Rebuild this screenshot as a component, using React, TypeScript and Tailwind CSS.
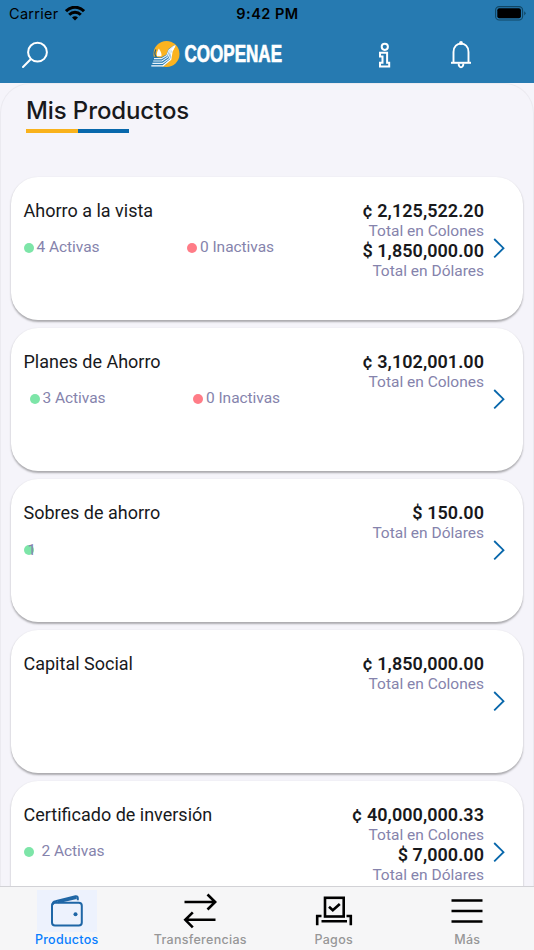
import React from "react";
import clsx from "clsx";

type Total = { amount: string; label: string };

type Product = {
  name: string;
  totals: Total[];
  active?: string;
  inactive?: string;
  statusClass?: string;
  labelClass?: string;
};

const products: Product[] = [
  {
    name: "Ahorro a la vista",
    active: "4 Activas",
    inactive: "0 Inactivas",
    totals: [
      { amount: "¢ 2,125,522.20", label: "Total en Colones" },
      { amount: "$ 1,850,000.00", label: "Total en Dólares" },
    ],
  },
  {
    name: "Planes de Ahorro",
    active: "3 Activas",
    inactive: "0 Inactivas",
    statusClass: "pl-1.5",
    totals: [{ amount: "¢ 3,102,001.00", label: "Total en Colones" }],
  },
  {
    name: "Sobres de ahorro",
    active: "1",
    labelClass: "-ml-[6px] mt-[2px] text-[15px]",
    totals: [{ amount: "$ 150.00", label: "Total en Dólares" }],
  },
  {
    name: "Capital Social",
    totals: [{ amount: "¢ 1,850,000.00", label: "Total en Colones" }],
  },
  {
    name: "Certificado de inversión",
    active: "2 Activas",
    labelClass: "ml-2",
    totals: [
      { amount: "¢ 40,000,000.33", label: "Total en Colones" },
      { amount: "$ 7,000.00", label: "Total en Dólares" },
    ],
  },
];

function StatusBar() {
  return (
    <div className="grid h-7 grid-cols-3 items-center pr-2 pl-[9px] font-['Inter',sans-serif] text-black">
      <div className="flex items-center gap-1.5">
        <span className="text-[14.5px] tracking-[0.3px]">Carrier</span>
        <svg className="-mt-0.5" width="20" height="15" viewBox="0 0 20 15" fill="none" stroke="black" strokeWidth="3">
          <path d="M1 5.2 C6-.1 14-.1 19 5.2" />
          <path d="M4.2 8.8 C7.5 5.5 12.5 5.5 15.8 8.8" />
          <path d="M7 11.5 Q10 8.9 13 11.5 L10 14.5Z" fill="black" stroke="none" />
        </svg>
      </div>
      <div className="text-center text-[14.5px] font-semibold tracking-[0.5px]">9:42 PM</div>
      <svg className="-mt-0.5 justify-self-end" width="31" height="15" viewBox="0 0 31 15">
        <rect x=".6" y=".6" width="27" height="13.4" rx="3.6" fill="none" stroke="#104664" strokeWidth="1.1" />
        <rect x="2.3" y="2.3" width="23.6" height="10" rx="2" fill="black" />
        <path d="M29.2 5.2 Q32 7.3 29.2 9.4Z" fill="#104664" />
      </svg>
    </div>
  );
}

function Logo() {
  return (
    <svg className="overflow-visible" width="136" height="30" viewBox="0 0 136 30">
      <circle cx="15.5" cy="14" r="13" fill="#fbb320" />
      <path d="M2.5 16.5 L10 17.5 L15.5 14.5 L17.5 9 L23.5 5 L21.5 10 L20.3 18 L15 24.5 L11 26.3 H0Z" fill="#2478b0" />
      <path
        d="M3 18.6 H10.5 L15.8 15.5 L18 9.8 L23 6 M2.2 21 H11 L17 17 L19 10.5 L23 6 M1.4 23.4 H11.5 L18.3 18.5 L20 11 L23 6"
        fill="none"
        stroke="#e8f3fa"
        strokeWidth="1.1"
      />
      <path d="M.3 25.8 H12 L19.7 19.5 L21 11.5 L24 5.5" fill="none" stroke="white" strokeWidth="1.3" />
      <path d="M20 9.5 L24.8 4.8 L21.5 11Z" fill="white" />
      <path d="M7.8 8.5 Q11.3 13.5 10.3 16.3 H5.9 Q5.2 13 7.8 8.5Z" fill="white" />
      <path d="M4.9 9.5 Q2.7 14 5.4 17" fill="none" stroke="#185f91" strokeWidth="1.2" />
      <text
        x="33.5"
        y="22.4"
        textLength="97.5"
        lengthAdjust="spacingAndGlyphs"
        className="fill-white stroke-white font-['Liberation_Sans',Arial,sans-serif] text-[24px] font-bold"
        strokeWidth=".7"
      >
        COOPENAE
      </text>
    </svg>
  );
}

function Header() {
  return (
    <header className="h-[83px] shrink-0 bg-[#267ab1]">
      <StatusBar />
      <div className="flex h-[53px] items-center pl-[21px]">
        <svg width="28" height="28" viewBox="0 0 28 28" fill="none" stroke="white" strokeWidth="2" strokeLinecap="round">
          <circle cx="16.5" cy="11.2" r="9.4" />
          <path d="M9.7 18.2 L2 26" />
        </svg>
        <div className="ml-[102px] w-[134px]">
          <Logo />
        </div>
        <svg className="ml-[93px]" width="14" height="28" viewBox="0 0 14 28" fill="none" stroke="white" strokeWidth="2">
          <circle cx="6.8" cy="5.8" r="3.1" />
          <path d="M2 11.8 H9.1 V21.8 H11.2 V25.4 H2 V21.8 H4.5 V15.4 H2Z" />
        </svg>
        <svg className="ml-[58px]" width="22" height="28" viewBox="0 0 22 28" fill="none" stroke="white" strokeWidth="1.9">
          <path d="M3.5 21.5 V11 C3.5 -.2 18.5 -.2 18.5 11 V21.5" />
          <path d="M1 21.8 H21" strokeWidth="2" />
          <circle cx="11" cy="2" r="1.9" fill="white" stroke="none" />
          <path d="M8.7 22.5 C8.3 27.4 13.7 27.4 13.3 22.5" />
        </svg>
      </div>
    </header>
  );
}

function ProductCard({ product }: { product: Product }) {
  return (
    <article className="flex h-[143px] shrink-0 rounded-[27px] bg-white pt-[24px] pr-[18px] pl-[13px] shadow-[0_1.5px_2px_rgba(0,0,0,0.3)]">
      <div className="flex-1">
        <h2 className="-ml-[0.5px] text-[18px] leading-5 text-[#18191c]">{product.name}</h2>
        {product.active && (
          <div className={clsx("-ml-[0.5px] mt-4 flex h-5 text-[15.5px] leading-5 tracking-[-0.05px] text-[#8583ac]", product.statusClass)}>
            <div className="flex w-[163.5px] items-center">
              <span className="mt-[2px] size-[10px] rounded-full bg-[#7de5a8]" />
              <span className={clsx(product.labelClass ?? "ml-[3px]")}>{product.active}</span>
            </div>
            {product.inactive && (
              <div className="flex items-center">
                <span className="mt-[2px] size-[10px] rounded-full bg-[#ff7c87]" />
                <span className="ml-[3px]">{product.inactive}</span>
              </div>
            )}
          </div>
        )}
      </div>
      <div className="text-right">
        {product.totals.map((total) => (
          <React.Fragment key={total.label}>
            <p className="text-[18px] leading-5 font-semibold tracking-[0.05px] text-[#18191c]">{total.amount}</p>
            <p className="text-[15.5px] leading-5 text-[#8583ac]">{total.label}</p>
          </React.Fragment>
        ))}
      </div>
      <svg className="mt-[37px] ml-[9px]" width="12" height="20" viewBox="0 0 12 20" fill="none" stroke="#0867ab" strokeWidth="1.8">
        <path d="M1.2 1 L10.5 10.2 L1.2 19.4" />
      </svg>
    </article>
  );
}

function TabBar() {
  const label = "font-['Inter',sans-serif] text-[12.5px] leading-4 font-medium tracking-[0.3px]";

  return (
    <nav className="z-10 grid h-16 shrink-0 grid-cols-4 border-t border-[#d2d2d6] bg-[#f6f6f7] pt-[3px] text-[#979797]">
      <div className="flex flex-col items-center">
        <div className="flex h-[42px] w-[60px] items-center justify-center bg-[#edf2fd]">
          <svg width="34" height="34" viewBox="0 0 34 34" fill="none" stroke="#1e66a6" strokeWidth="2">
            <rect x="2" y="8.8" width="29.8" height="22.8" rx="3" />
            <path d="M2.5 11 Q2.5 7.7 5.5 7.2 L25.5 2.3 Q27.8 2 27.8 4 V6.2 M8 8.3 L26.5 4" />
            <circle cx="25.5" cy="20.3" r="2" fill="#1e66a6" stroke="none" />
          </svg>
        </div>
        <span className={clsx(label, "text-[#087eff]")}>Productos</span>
      </div>
      <div className="flex flex-col items-center">
        <svg width="34" height="42" viewBox="0 0 34 42" fill="none" stroke="black" strokeWidth="2.6">
          <path d="M1.5 12 H32 M24.5 4.5 L32.2 12 L24.5 19.5" />
          <path d="M32.5 29.8 H2.5 M9.8 22.3 L2.3 29.8 L9.8 37.3" />
        </svg>
        <span className={label}>Transferencias</span>
      </div>
      <div className="flex flex-col items-center">
        <svg width="38" height="42" viewBox="0 0 38 42" fill="none" stroke="black" strokeWidth="2.6">
          <rect x="10" y="7.8" width="18.7" height="18.7" />
          <path d="M14 16.8 L17.8 20.3 L24.8 14" strokeWidth="2.6" />
          <path d="M6.5 26 H2.2 V35.3 M31.5 26 H35.8 V35.3 M6.5 31.3 H32" />
        </svg>
        <span className={label}>Pagos</span>
      </div>
      <div className="flex flex-col items-center">
        <svg width="32" height="42" viewBox="0 0 32 42" fill="none" stroke="black" strokeWidth="2.4">
          <path d="M.5 10.5 H31.5 M.5 21 H31.5 M.5 31.5 H31.5" />
        </svg>
        <span className={label}>Más</span>
      </div>
    </nav>
  );
}

export default function App() {
  return (
    <div className="flex h-[950px] w-[534px] flex-col overflow-hidden bg-[#f5f4fa] font-['Roboto',sans-serif]">
      <Header />
      <main className="min-h-0 flex-1 overflow-hidden rounded-t-[30px] border-x border-t border-[#ebeaf0] px-[10px]">
        <div className="h-[93px] px-[15px] pt-[12px]">
          <h1 className="font-['Inter',sans-serif] text-[24px] leading-[30px] font-medium tracking-[-0.1px] text-[#18191c]">
            Mis Productos
          </h1>
          <div className="mt-[3px] flex h-1 w-[103px]">
            <div className="flex-1 bg-[#f9b21c]" />
            <div className="flex-1 bg-[#0868ac]" />
          </div>
        </div>
        <div className="flex flex-col gap-2">
          {products.map((product) => (
            <ProductCard key={product.name} product={product} />
          ))}
        </div>
      </main>
      <TabBar />
    </div>
  );
}
